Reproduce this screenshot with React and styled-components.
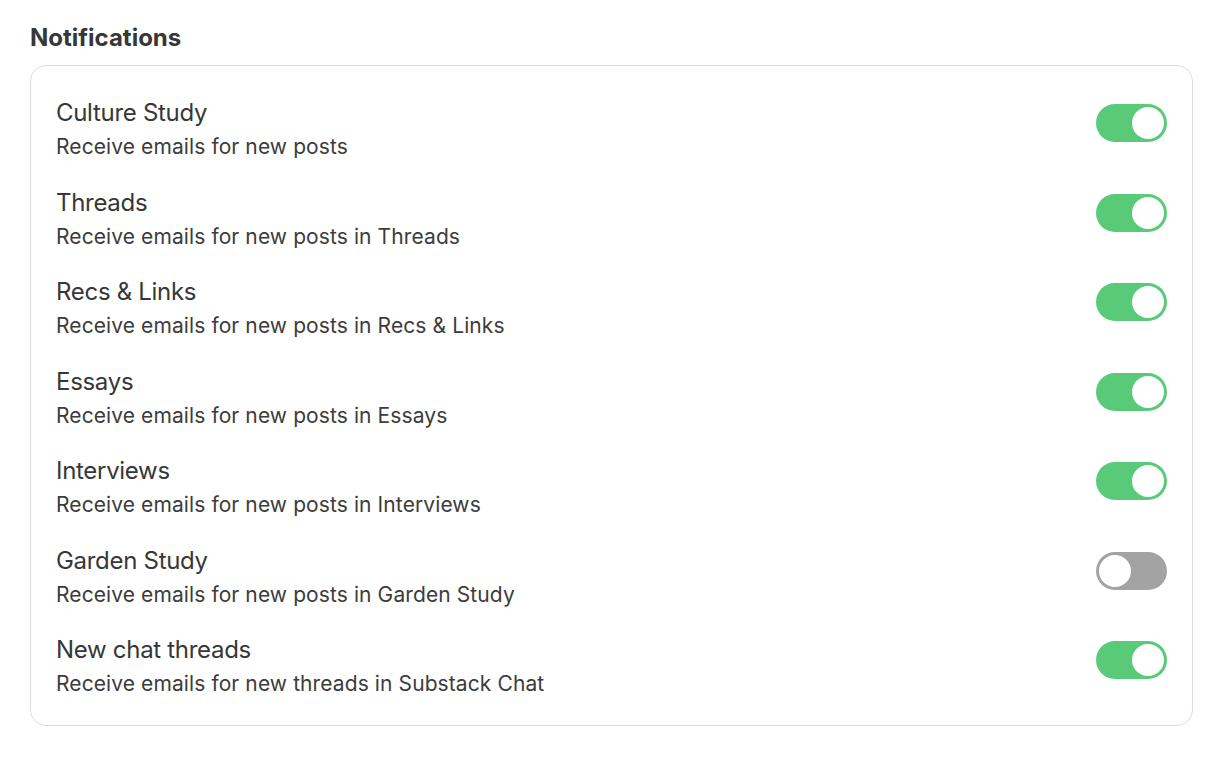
import React, { useState } from "react";
import styled, { createGlobalStyle } from "styled-components";

const GlobalStyle = createGlobalStyle`
  html, body {
    margin: 0;
    padding: 0;
    background: #ffffff;
  }
  body {
    font-family: Inter, "Noto Sans", "Liberation Sans", sans-serif;
    color: #363737;
    -webkit-font-smoothing: antialiased;
  }
`;

const Page = styled.div`
  padding: 21px 31px 34px 30px;
`;

const Heading = styled.h2`
  margin: 0 0 10px;
  font-size: 24px;
  line-height: 34px;
  font-weight: 700;
  color: #363737;
  letter-spacing: 0;
`;

const Card = styled.div`
  border: 1px solid #dedede;
  border-radius: 16px;
  padding: 32px 25px 27px 25px;
  display: flex;
  flex-direction: column;
  gap: 26.5px;
`;

const Row = styled.div`
  display: flex;
  align-items: flex-start;
  justify-content: space-between;
`;

const Text = styled.div`
  display: flex;
  flex-direction: column;
  gap: 5px;
`;

const Title = styled.div`
  font-size: 24px;
  line-height: 30px;
  font-weight: 400;
  color: #363737;
  letter-spacing: -0.3px;
`;

const Subtitle = styled.div`
  font-size: 21px;
  line-height: 28px;
  font-weight: 400;
  color: #3c3c3c;
  letter-spacing: 0.1px;
`;

const Switch = styled.button`
  width: 71px;
  height: 38px;
  margin-top: 6px;
  border-radius: 19px;
  border: none;
  padding: 0;
  cursor: pointer;
  position: relative;
  flex-shrink: 0;
  background: ${({ $on }) => ($on ? "#59cb78" : "#a3a3a3")};
  transition: background 0.2s;
`;

const Knob = styled.span`
  position: absolute;
  top: 3px;
  left: ${({ $on }) => ($on ? "36px" : "3px")};
  width: 32px;
  height: 32px;
  border-radius: 50%;
  background: #ffffff;
  transition: left 0.2s;
`;

const initial = [
  { name: "Culture Study", desc: "Receive emails for new posts", on: true },
  { name: "Threads", desc: "Receive emails for new posts in Threads", on: true },
  { name: "Recs & Links", desc: "Receive emails for new posts in Recs & Links", on: true },
  { name: "Essays", desc: "Receive emails for new posts in Essays", on: true },
  { name: "Interviews", desc: "Receive emails for new posts in Interviews", on: true },
  { name: "Garden Study", desc: "Receive emails for new posts in Garden Study", on: false },
  { name: "New chat threads", desc: "Receive emails for new threads in Substack Chat", on: true },
];

const App = () => {
  const [items, setItems] = useState(initial);

  const toggle = (name) => () =>
    setItems((list) => list.map((it) => (it.name === name ? { ...it, on: !it.on } : it)));

  return (
    <Page>
      <GlobalStyle />
      <Heading>Notifications</Heading>
      <Card>
        {items.map(({ name, desc, on }) => (
          <Row key={name}>
            <Text>
              <Title>{name}</Title>
              <Subtitle>{desc}</Subtitle>
            </Text>
            <Switch $on={on} onClick={toggle(name)} aria-label={name}>
              <Knob $on={on} />
            </Switch>
          </Row>
        ))}
      </Card>
    </Page>
  );
};

export default App;
